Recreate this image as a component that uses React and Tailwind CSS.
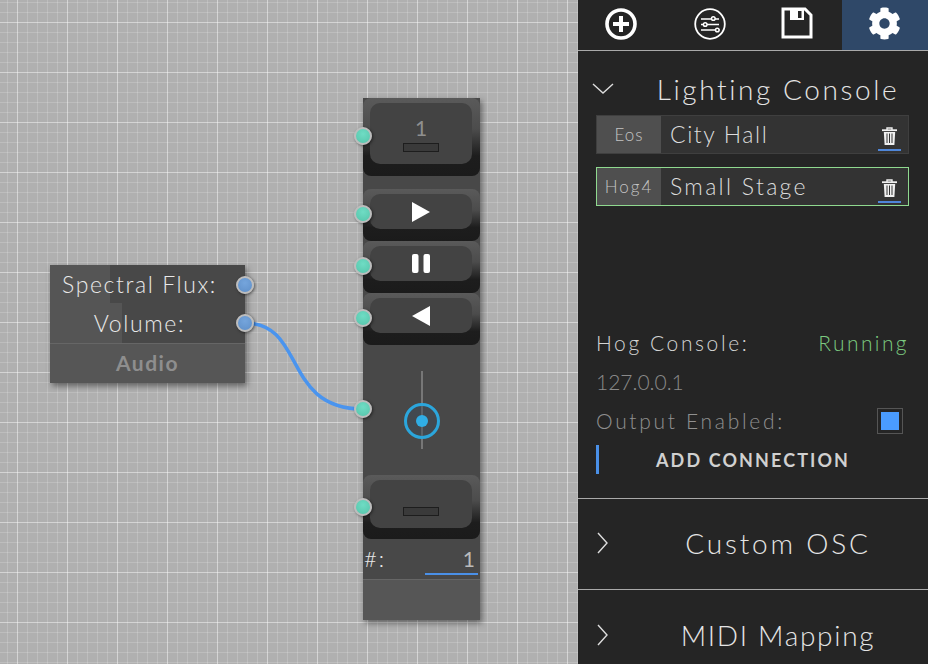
import React from "react";
import { FaCog } from "react-icons/fa";

function Port({ color = "teal" }) {
  const fill = color === "teal"
    ? "bg-[radial-gradient(circle_at_50%_35%,#6fdcc4,#55c4aa)]"
    : "bg-[radial-gradient(circle_at_50%_35%,#75a5dc,#5f8fc8)]";
  return <span className={`absolute -translate-x-1/2 -translate-y-1/2 w-[18px] h-[18px] rounded-full border-[2.5px] border-[#bdbdbd] shadow-[1px_1px_3px_rgba(0,0,0,0.5)] ${fill}`} />;
}

function Slot() {
  return <span className="block w-9 h-[9px] bg-[#3a3a3a] border border-[#1d1d1d]" />;
}

function KeyButton({ outer, inner, port, children }) {
  return (
    <div className={`relative w-full rounded-lg bg-[linear-gradient(#5a5a5a_0%,#4c4c4c_40%,#1d1d1d_74%,#1b1b1b_100%)] pl-[7px] pr-[8px] pt-[5px] ${outer}`}>
      <div className={`rounded-[10px] bg-[#434343] flex flex-col items-center justify-center ${inner}`}>{children}</div>
      <span className={`absolute left-0 block ${port}`}>
        <Port />
      </span>
    </div>
  );
}

function Trash() {
  return (
    <svg width="15" height="18" viewBox="0 0 15 18" fill="none" stroke="#f0f0f0">
      <path d="M0 3.2h15" strokeWidth="1.8" />
      <path d="M5 3V1h5v2" strokeWidth="1.4" />
      <path d="M1.8 5l.8 13h9.8l.8-13z" fill="#f0f0f0" stroke="none" />
      <path d="M5 6.5v9.5M7.5 6.5v9.5M10 6.5v9.5" stroke="#333" strokeWidth="1" />
    </svg>
  );
}

function ConsoleRow({ tag, name, active, tagClass, nameClass }) {
  return (
    <div className={`flex items-stretch h-[39px] border bg-[#333] ${active ? "border-[#8fd98f]" : "border-[#3f3f3f]"}`}>
      <div className={`w-[64px] bg-[#4f4f4f] flex items-center justify-center text-[#c4c4c4] ${tagClass}`}>{tag}</div>
      <div className={`flex-1 pl-[9px] text-[23px] text-[#dcdcdc] flex items-center ${nameClass}`}>{name}</div>
      <div className="w-[23px] mr-[7px] flex flex-col items-center justify-end">
        <Trash />
        <span className="block w-[23px] h-[2px] mt-[4px] mb-[2px] bg-[#4f86d9]" />
      </div>
    </div>
  );
}

function Chevron({ open }) {
  return (
    <svg width="22" height="22" viewBox="0 0 22 22" fill="none" stroke="#ddd" strokeWidth="1.4">
      {open ? <path d="M1 6l10 9 10-9" /> : <path d="M7 1l9 10-9 10" />}
    </svg>
  );
}

function SectionHead({ title, open, className, titleClass }) {
  return (
    <div className={`flex items-center w-full justify-between ${open ? "pl-[14px]" : "pl-[13px]"} ${className}`}>
      <Chevron open={open} />
      <div className={`w-[300px] text-center text-[28px] text-[#e4e4e4] font-light ${titleClass}`}>{title}</div>
    </div>
  );
}

export default function App() {
  return (
    <div className="flex w-[928px] h-[664px] overflow-hidden font-['Lato','Liberation_Sans',sans-serif] font-light">
      <div className="relative flex-1 bg-[#b0b0b0] bg-[linear-gradient(rgba(255,255,255,0.34)_1px,transparent_1px),linear-gradient(90deg,rgba(255,255,255,0.34)_1px,transparent_1px),linear-gradient(rgba(255,255,255,0.17)_1px,transparent_1px),linear-gradient(90deg,rgba(255,255,255,0.17)_1px,transparent_1px)] bg-[size:50px_50px,50px_50px,10px_10px,10px_10px] bg-[position:0_22px,17px_0,0_2px,7px_0]">
        <svg className="absolute inset-0" width="578" height="664" fill="none">
          <path d="M245 323C306 323 282 409 363 409" stroke="#4a94ee" strokeWidth="3.5" />
        </svg>

        {/* Audio node */}
        <div className="absolute left-[50px] top-[265px] w-[195px] shadow-[2px_3px_6px_rgba(0,0,0,0.45)] bg-[#484848]">
          <div className="relative h-[38px] flex items-center justify-end pr-[28px] text-[23px] tracking-[1.6px] text-[#e8e8e8]">
            <span className="absolute left-0 top-0 h-full w-[60px] bg-[#555]" />
            <span className="relative">Spectral Flux:</span>
            <span className="absolute right-0 top-[20px]"><Port color="blue" /></span>
          </div>
          <div className="relative h-[40px] flex items-center justify-end pr-[60px] text-[23px] tracking-[1.6px] text-[#e8e8e8]">
            <span className="absolute left-0 top-0 h-full w-[72px] bg-[#555]" />
            <span className="relative">Volume:</span>
            <span className="absolute right-0 top-[20px]"><Port color="blue" /></span>
          </div>
          <div className="h-[40px] border-t border-[#666] bg-[#565656] flex items-center justify-center text-[21px] font-bold tracking-[1.5px] text-[#8e8e8e] pb-[2px]">Audio</div>
        </div>

        {/* Controller node */}
        <div className="absolute left-[363px] top-[98px] w-[117px] h-[522px] bg-[#484848] shadow-[2px_3px_6px_rgba(0,0,0,0.45)] flex flex-col">
          <KeyButton outer="h-[78px]" inner="h-[61px]" port="top-[38px]">
            <span className="text-[21px] leading-[24px] text-[#8f8f8f] font-normal mb-[3px]">1</span>
            <Slot />
          </KeyButton>
          <div className="h-[13px]" />
          <KeyButton outer="h-[52px]" inner="h-[35px]" port="top-[25px]">
            <svg width="18" height="20" viewBox="0 0 18 20" fill="#fff"><path d="M0 0l18 10L0 20z" /></svg>
          </KeyButton>
          <KeyButton outer="h-[52px]" inner="h-[35px]" port="top-[25px]">
            <svg width="18" height="20" viewBox="0 0 18 20" fill="#fff"><rect width="6.5" height="19" rx="2" /><rect x="11.5" width="6.5" height="19" rx="2" /></svg>
          </KeyButton>
          <KeyButton outer="h-[52px]" inner="h-[35px]" port="top-[25px]">
            <svg width="18" height="20" viewBox="0 0 18 20" fill="#fff"><path d="M18 0L0 10l18 10z" /></svg>
          </KeyButton>
          <div className="relative h-[130px]">
            <span className="absolute left-[58px] top-[26px] w-[2px] h-[78px] bg-[#777]" />
            <span className="absolute left-[41px] top-[58px] w-9 h-9 rounded-full border-[3px] border-[#2ba6dc] bg-[rgba(60,75,90,0.45)] flex items-center justify-center">
              <span className="block w-3 h-3 rounded-full bg-[#30aee6]" />
            </span>
            <span className="absolute left-0 top-[64px]"><Port /></span>
          </div>
          <KeyButton outer="h-[64px]" inner="h-[48px] pt-[15px]" port="top-[32px]">
            <Slot />
          </KeyButton>
          <div className="relative h-[40px] flex items-start justify-between pl-[1px] pr-[5px] pt-[6px] text-[#e8e8e8]">
            <span className="text-[22px] leading-[28px] tracking-[2px]">#:</span>
            <span className="text-[21px] leading-[28px] text-[#bbb] font-normal">1</span>
            <span className="absolute right-[2px] bottom-[4px] w-[53px] h-[2px] bg-[#4a90e8]" />
          </div>
          <div className="flex-1 border-t border-[#666] bg-[#565656]" />
        </div>
      </div>

      <aside className="w-[350px] bg-[#252525] flex flex-col">
        <div className="flex h-[51px] border-b border-[#aaa]">
          <div className="flex-1 flex items-center justify-center pb-[3px] pr-[3px]">
            <svg width="32" height="32" viewBox="0 0 32 32" fill="none" stroke="#fff"><circle cx="16" cy="16" r="14" strokeWidth="3.6" /><path d="M16 8v16M8 16h16" strokeWidth="4" /></svg>
          </div>
          <div className="flex-1 flex items-center justify-center pb-[3px]">
            <svg width="32" height="32" viewBox="0 0 32 32" fill="none" stroke="#fff" strokeWidth="1.5">
              <circle cx="16" cy="16" r="14.8" strokeWidth="1.8" />
              <path d="M7 11h10.5M21 11h4M7 16.5h2.5M13 16.5h12M7 22h14.5M25 22h.5" />
              <circle cx="19.3" cy="10.5" r="1.8" /><circle cx="11.2" cy="16.5" r="1.8" /><circle cx="23.3" cy="22" r="1.8" />
            </svg>
          </div>
          <div className="flex-1 flex items-center justify-center pb-[4px] pr-[2px]">
            <svg width="32" height="32" viewBox="0 0 32 32" fill="none"><path d="M2 2h22l6 6v22H2z" stroke="#fff" strokeWidth="3" /><path d="M9 2h14v11H9z" fill="#fff" /><rect x="17" y="4" width="3.5" height="7" fill="#252525" /></svg>
          </div>
          <div className="flex-1 bg-[#2f4868] flex items-center justify-center text-white pb-[3px]"><FaCog size={33} /></div>
        </div>

        <div className="h-[448px] border-b border-[#aaa] flex flex-col">
          <SectionHead title="Lighting Console" open className="mt-[22px] h-[32px]" titleClass="tracking-[2.6px]" />
          <div className="pl-[18px] pr-[19px] flex flex-col">
            <div className="mt-[10px] flex flex-col gap-[13px]">
              <ConsoleRow tag="Eos" name="City Hall" tagClass="text-[17px] tracking-[1px]" nameClass="tracking-[1.6px]" />
              <ConsoleRow tag="Hog4" name="Small Stage" active tagClass="text-[17px] tracking-[2px]" nameClass="tracking-[2.3px]" />
            </div>
            <div className="mt-[123px] flex justify-between text-[21px] leading-[28px] tracking-[2.6px]">
              <span className="text-[#d4d4d4]">Hog Console:</span>
              <span className="text-[#7ccb80] tracking-[2.4px]">Running</span>
            </div>
            <div className="mt-[11px] text-[21px] leading-[28px] text-[#8a8a8a]">127.0.0.1</div>
            <div className="mt-[10px] flex justify-between items-center h-[30px] pr-[6px] text-[21px] tracking-[2.7px] text-[#909090]">
              <span>Output Enabled:</span>
              <span className="w-[26px] h-[26px] border border-[#555] flex items-center justify-center"><span className="block w-[18px] h-[18px] bg-[#4a9cff]" /></span>
            </div>
            <div className="mt-[9px] h-[29px] border-l-[3px] border-[#4a90e8] pl-[57px] pt-[1px] flex items-center text-[18px] font-bold tracking-[2.1px] text-[#d0d0d0]">ADD CONNECTION</div>
          </div>
        </div>

        <div className="h-[91px] border-b border-[#aaa] flex items-center pb-[2px]">
          <SectionHead title="Custom OSC" titleClass="tracking-[2.8px]" />
        </div>
        <div className="flex-1 flex items-start pt-[24px]">
          <SectionHead title="MIDI Mapping" titleClass="tracking-[1.7px]" />
        </div>
      </aside>
    </div>
  );
}
